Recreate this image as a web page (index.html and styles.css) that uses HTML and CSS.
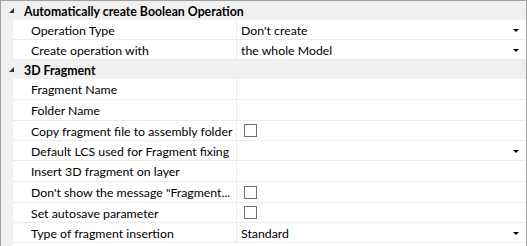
FILE: index.html
```html
<!DOCTYPE html>
<html>
<head>
<meta charset="utf-8">
<link rel="stylesheet" href="styles.css">
</head>
<body>
<div class="grid">
  <div class="cat"><span class="tri"></span><span class="cat-label">Automatically create Boolean Operation</span></div>
  <div class="row"><div class="gut"></div><div class="name">Operation Type</div><div class="val">Don't create<span class="dd"></span></div></div>
  <div class="row"><div class="gut"></div><div class="name">Create operation with</div><div class="val">the whole Model<span class="dd"></span></div></div>
  <div class="cat"><span class="tri"></span><span class="cat-label">3D Fragment</span></div>
  <div class="row tall"><div class="gut"></div><div class="name">Fragment Name</div><div class="val"></div></div>
  <div class="row tall"><div class="gut"></div><div class="name">Folder Name</div><div class="val"></div></div>
  <div class="row"><div class="gut"></div><div class="name">Copy fragment file to assembly folder</div><div class="val"><span class="cb"></span></div></div>
  <div class="row"><div class="gut"></div><div class="name">Default LCS used for Fragment fixing</div><div class="val"><span class="dd"></span></div></div>
  <div class="row tall"><div class="gut"></div><div class="name">Insert 3D fragment on layer</div><div class="val"></div></div>
  <div class="row tall"><div class="gut"></div><div class="name">Don't show the message "Fragment...</div><div class="val"><span class="cb"></span></div></div>
  <div class="row"><div class="gut"></div><div class="name">Set autosave parameter</div><div class="val"><span class="cb"></span></div></div>
  <div class="row"><div class="gut"></div><div class="name">Type of fragment insertion</div><div class="val">Standard<span class="dd"></span></div></div>
</div>
</body>
</html>
```

FILE: styles.css
```css
html, body { margin: 0; padding: 0; background: #fff; }
body { font-family: Lato, "Open Sans", sans-serif; font-size: 12.3px; color: #000; }
.grid {
  box-sizing: border-box;
  width: 527px;
  height: 246px;
  border: 1px solid #a0a0a0;
  border-bottom: none;
  background: linear-gradient(to right, #f0f0f0 12px, #fff 12px);
  display: flex;
  flex-direction: column;
}
.cat {
  box-sizing: border-box;
  height: 19px;
  background: #f0f0f0;
  display: flex;
  align-items: center;
  font-weight: bold;
  flex: none;
  padding-top: 1px;
}
.tri {
  width: 0; height: 0;
  margin-left: 8px;
  margin-top: -2px;
  border-style: solid;
  border-width: 0 0 5px 5px;
  border-color: transparent transparent #333 transparent;
}
.cat-label { margin-left: 10px; }
.row {
  height: 20px;
  display: flex;
  flex: none;
}
.row.tall { height: 21px; }
.gut { width: 12px; background: #f0f0f0; flex: none; }
.name {
  box-sizing: border-box;
  width: 224px;
  padding-left: 18px;
  padding-top: 1px;
  border-bottom: 1px solid #ebebeb;
  border-right: 1px solid #ebebeb;
  display: flex;
  align-items: center;
  white-space: nowrap;
  overflow: hidden;
  flex: none;
}
.val {
  box-sizing: border-box;
  flex: 1;
  padding-left: 4px;
  padding-top: 1px;
  border-bottom: 1px solid #ebebeb;
  display: flex;
  align-items: center;
  position: relative;
}
.dd {
  position: absolute;
  right: 7px;
  top: 9px;
  width: 0; height: 0;
  border-style: solid;
  border-width: 3px 3px 0 3px;
  border-color: #000 transparent transparent transparent;
}
.cb {
  box-sizing: border-box;
  width: 13px; height: 13px;
  border: 1px solid #707070;
  background: #fff;
  margin-left: 3px;
  margin-top: -1px;
}
```
